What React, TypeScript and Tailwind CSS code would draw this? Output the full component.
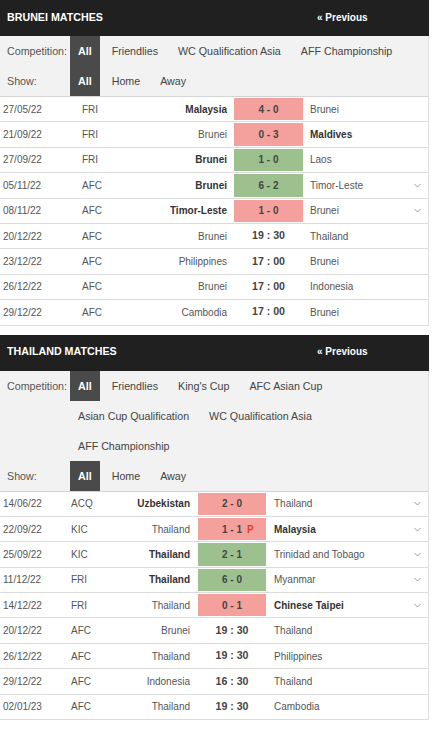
type Match = {
  date: string;
  comp: string;
  home: string;
  away: string;
  score: string;
  result?: "win" | "loss";
  bold?: "home" | "away";
  pen?: boolean;
  more?: boolean;
};

type Cols = {
  date: string;
  comp: string;
  home: string;
  score: string;
  away: string;
};

const bruneiCols: Cols = {
  date: "w-[82px] pl-[3px]",
  comp: "w-[60px]",
  home: "w-[92px] pr-[7px]",
  score: "w-[69px]",
  away: "pl-[7px]",
};

const thaiCols: Cols = {
  date: "w-[71px] pl-[3px]",
  comp: "w-[50px]",
  home: "w-[77px] pr-[8px]",
  score: "w-[68px]",
  away: "pl-[8px]",
};

const bruneiMatches: Match[] = [
  { date: "27/05/22", comp: "FRI", home: "Malaysia", away: "Brunei", score: "4 - 0", result: "loss", bold: "home" },
  { date: "21/09/22", comp: "FRI", home: "Brunei", away: "Maldives", score: "0 - 3", result: "loss", bold: "away" },
  { date: "27/09/22", comp: "FRI", home: "Brunei", away: "Laos", score: "1 - 0", result: "win", bold: "home" },
  { date: "05/11/22", comp: "AFC", home: "Brunei", away: "Timor-Leste", score: "6 - 2", result: "win", bold: "home", more: true },
  { date: "08/11/22", comp: "AFC", home: "Timor-Leste", away: "Brunei", score: "1 - 0", result: "loss", bold: "home", more: true },
  { date: "20/12/22", comp: "AFC", home: "Brunei", away: "Thailand", score: "19 : 30" },
  { date: "23/12/22", comp: "AFC", home: "Philippines", away: "Brunei", score: "17 : 00" },
  { date: "26/12/22", comp: "AFC", home: "Brunei", away: "Indonesia", score: "17 : 00" },
  { date: "29/12/22", comp: "AFC", home: "Cambodia", away: "Brunei", score: "17 : 00" },
];

const thaiMatches: Match[] = [
  { date: "14/06/22", comp: "ACQ", home: "Uzbekistan", away: "Thailand", score: "2 - 0", result: "loss", bold: "home", more: true },
  { date: "22/09/22", comp: "KIC", home: "Thailand", away: "Malaysia", score: "1 - 1", result: "loss", bold: "away", pen: true, more: true },
  { date: "25/09/22", comp: "KIC", home: "Thailand", away: "Trinidad and Tobago", score: "2 - 1", result: "win", bold: "home", more: true },
  { date: "11/12/22", comp: "FRI", home: "Thailand", away: "Myanmar", score: "6 - 0", result: "win", bold: "home", more: true },
  { date: "14/12/22", comp: "FRI", home: "Thailand", away: "Chinese Taipei", score: "0 - 1", result: "loss", bold: "away", more: true },
  { date: "20/12/22", comp: "AFC", home: "Brunei", away: "Thailand", score: "19 : 30" },
  { date: "26/12/22", comp: "AFC", home: "Thailand", away: "Philippines", score: "19 : 30" },
  { date: "29/12/22", comp: "AFC", home: "Indonesia", away: "Thailand", score: "16 : 30" },
  { date: "02/01/23", comp: "AFC", home: "Thailand", away: "Cambodia", score: "19 : 30" },
];

function Chevron() {
  return (
    <svg width="7" height="5" viewBox="0 0 7 5" fill="none">
      <path d="M0.5 1 L3.5 4 L6.5 1" stroke="#9a9a9a" strokeWidth="1" />
    </svg>
  );
}

function FilterRow({ label, items }: { label: string; items: string[] }) {
  return (
    <div className="flex">
      <div className="w-[70px] shrink-0 pl-[7px] h-[30px] leading-[30px] text-[#555]">{label}</div>
      <div className="flex flex-wrap gap-x-[4px]">
        {items.map((item, i) => (
          <span
            key={item}
            className={
              i === 0
                ? "h-[30px] leading-[30px] px-[8px] bg-[#4a4a4a] text-white font-bold"
                : "h-[30px] leading-[30px] px-[8px] text-[#444]"
            }
          >
            {item}
          </span>
        ))}
      </div>
    </div>
  );
}

function MatchRow({ m, cols }: { m: Match; cols: Cols }) {
  const scoreBg =
    m.result === "loss" ? "bg-[#f4a19d]" : m.result === "win" ? "bg-[#9cc18f]" : "";
  return (
    <div className="flex items-stretch h-[25.4px] border-b border-[#dcdcdc] text-[10px] text-[#555]">
      <div className={`${cols.date} flex items-center`}>{m.date}</div>
      <div className={`${cols.comp} flex items-center`}>{m.comp}</div>
      <div
        className={`${cols.home} flex items-center justify-end ${
          m.bold === "home" ? "font-bold text-[#333]" : ""
        }`}
      >
        {m.home}
      </div>
      <div className={`${cols.score} py-[1px]`}>
        <div
          className={`relative h-full flex items-center justify-center font-bold text-[#444] ${scoreBg} ${
            m.result ? "" : "text-[10.6px]"
          }`}
        >
          {m.score}
          {m.pen && (
            <span className="absolute left-[49px] text-[#e53b27] font-bold">P</span>
          )}
        </div>
      </div>
      <div
        className={`${cols.away} flex-1 flex items-center ${
          m.bold === "away" ? "font-bold text-[#333]" : ""
        }`}
      >
        {m.away}
      </div>
      <div className="w-[22px] flex items-center justify-center">{m.more && <Chevron />}</div>
    </div>
  );
}

function Section({
  title,
  competitions,
  matches,
  cols,
}: {
  title: string;
  competitions: string[];
  matches: Match[];
  cols: Cols;
}) {
  return (
    <section className="w-[429px]">
      <div className="flex items-center h-[36px] bg-[#202020] text-white font-bold pb-[2px]">
        <div className="flex-1 pl-[7px] text-[10.7px]">{title}</div>
        <div className="w-[112px] text-[10px]">« Previous</div>
      </div>
      <div className="border-r border-[#dedede]">
        <div className="bg-[#f2f2f2] text-[10.7px] border-b border-[#d4d4d4]">
          <FilterRow label="Competition:" items={competitions} />
          <FilterRow label="Show:" items={["All", "Home", "Away"]} />
        </div>
        {matches.map((m) => (
          <MatchRow key={m.date + m.home} m={m} cols={cols} />
        ))}
      </div>
    </section>
  );
}

export default function App() {
  return (
    <div className="w-[432px] min-h-[734px] bg-white [font-family:'Liberation_Sans',Arial,sans-serif]">
      <div className="flex flex-col gap-[9px]">
        <Section
          title="BRUNEI MATCHES"
          competitions={["All", "Friendlies", "WC Qualification Asia", "AFF Championship"]}
          matches={bruneiMatches}
          cols={bruneiCols}
        />
        <Section
          title="THAILAND MATCHES"
          competitions={[
            "All",
            "Friendlies",
            "King's Cup",
            "AFC Asian Cup",
            "Asian Cup Qualification",
            "WC Qualification Asia",
            "AFF Championship",
          ]}
          matches={thaiMatches}
          cols={thaiCols}
        />
      </div>
    </div>
  );
}
